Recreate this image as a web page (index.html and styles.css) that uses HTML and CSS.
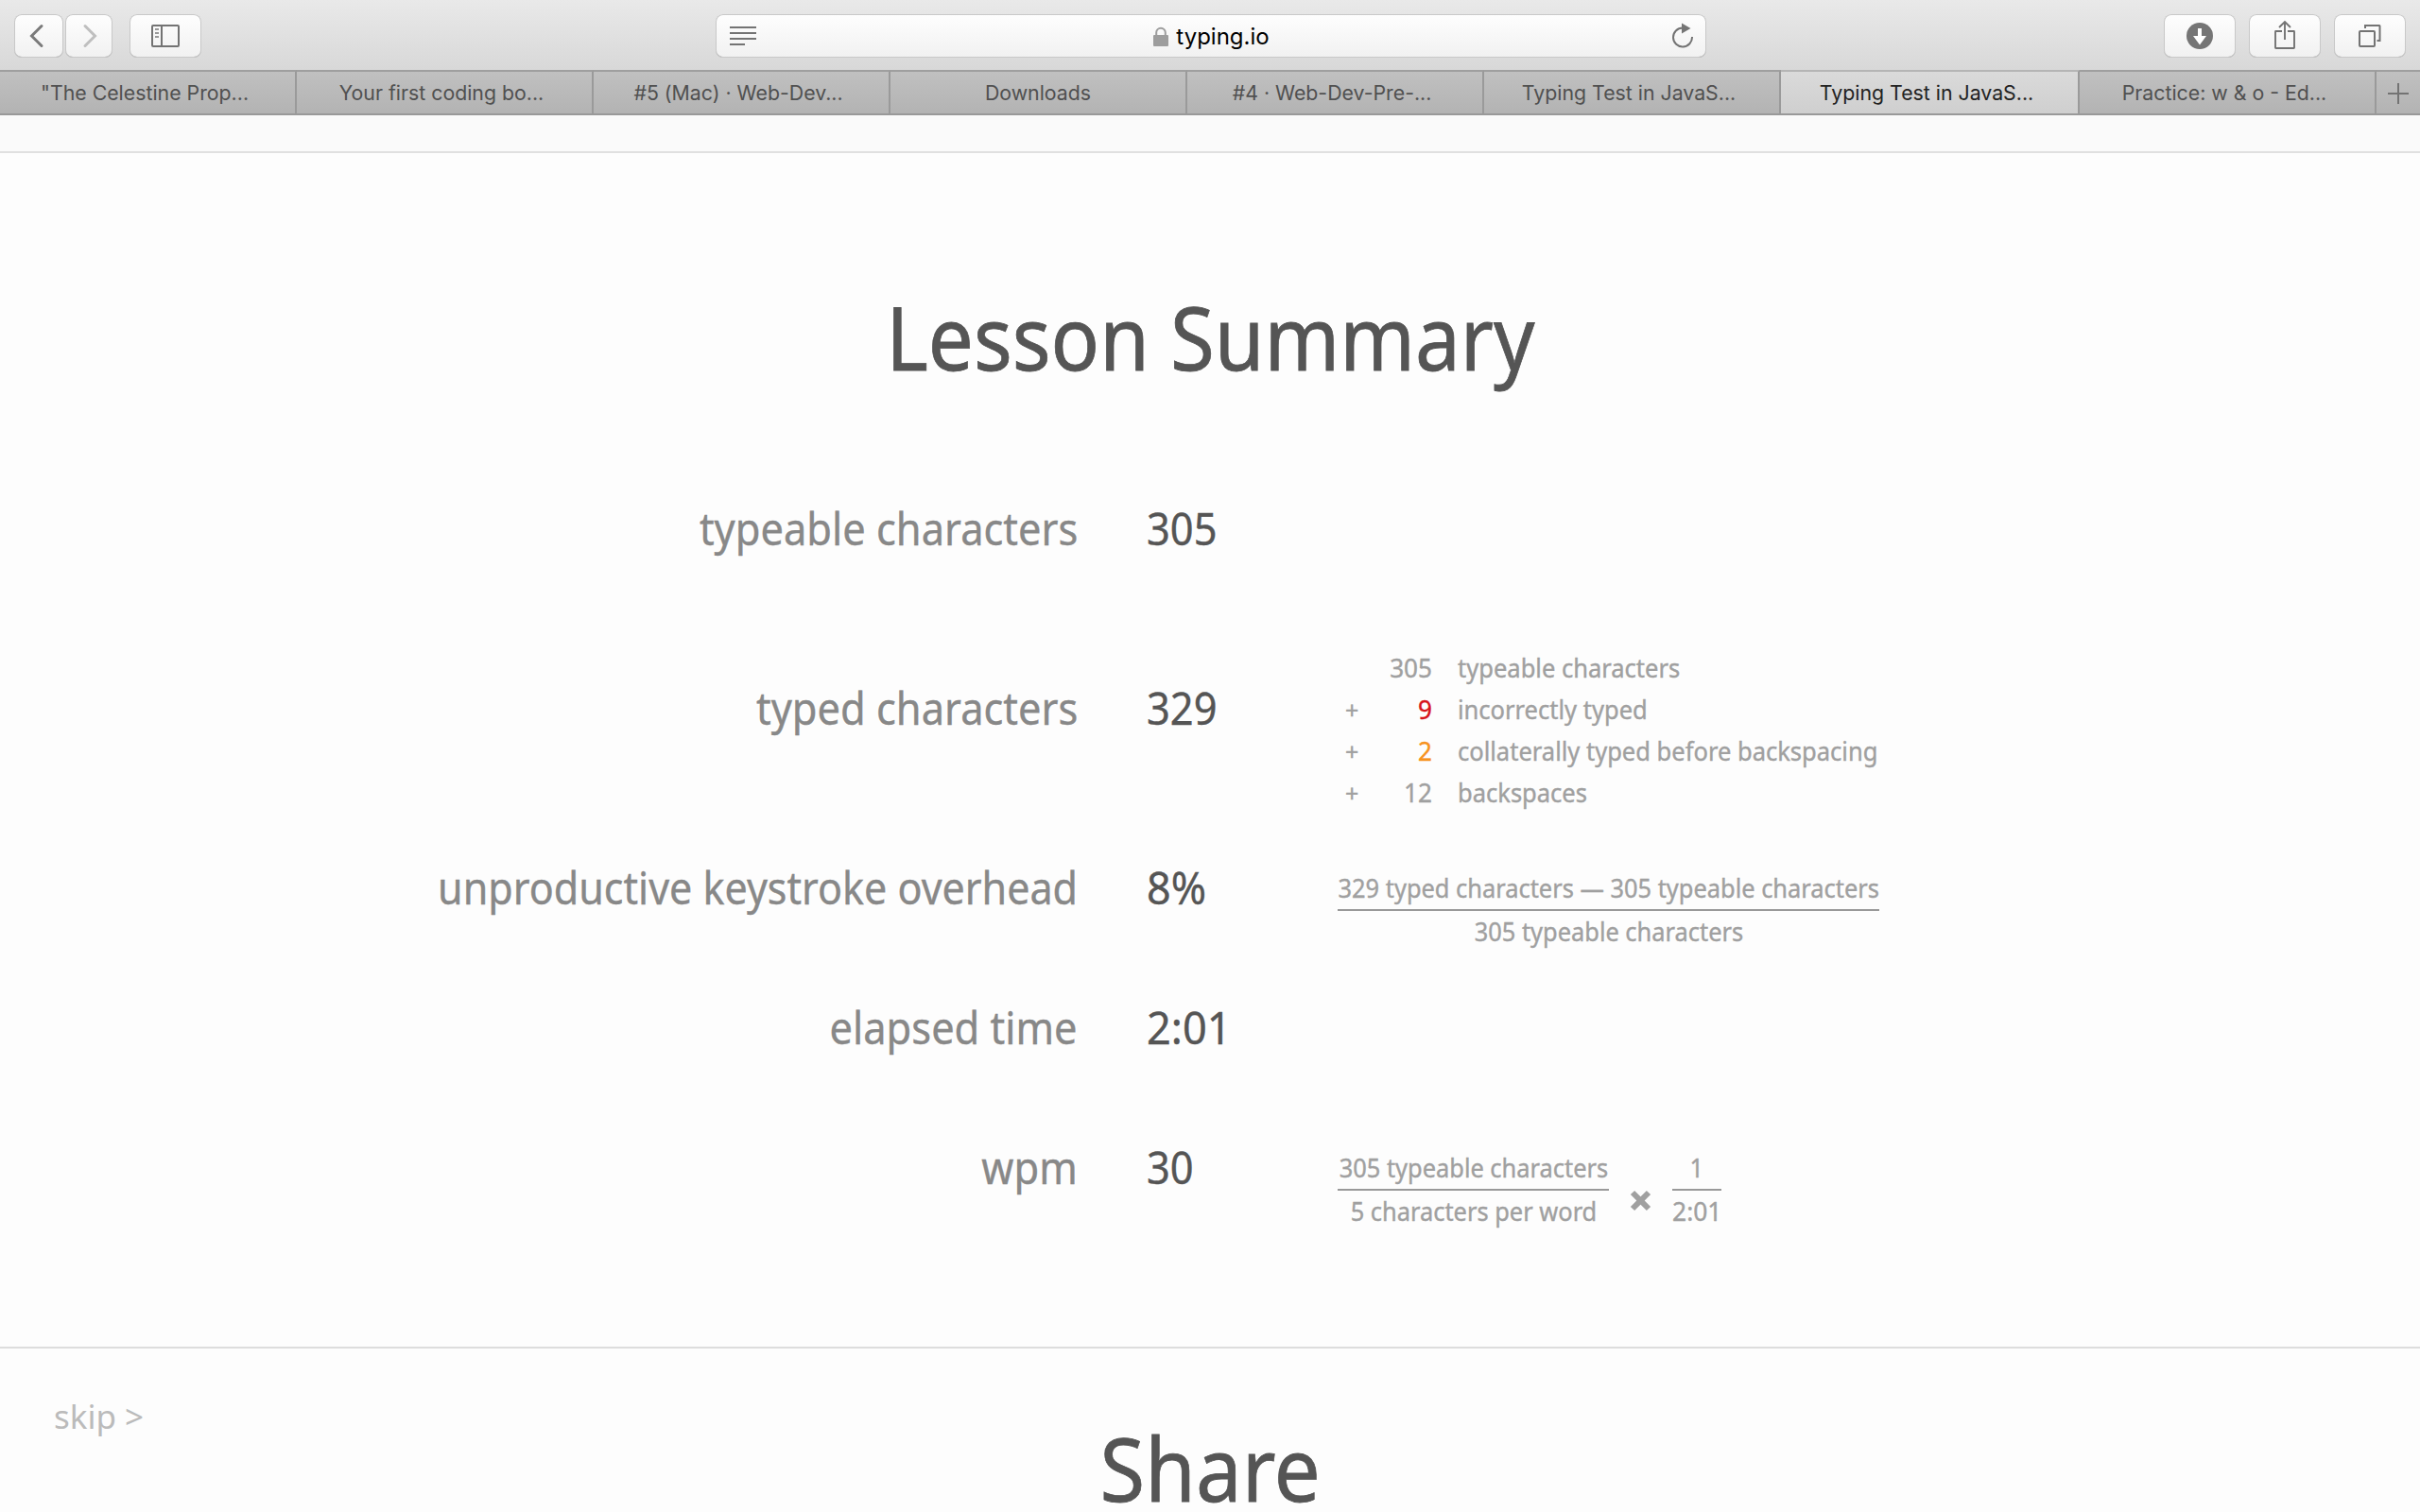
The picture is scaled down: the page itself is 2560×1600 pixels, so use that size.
FILE: index.html
```
<!DOCTYPE html>
<html lang="en">
<head>
<meta charset="utf-8">
<title>Typing Test in JavaScript</title>
<link rel="stylesheet" href="styles.css">
</head>
<body>
<header class="toolbar">
  <button class="btn btn-back" aria-label="Back"><svg width="52" height="46" viewBox="0 0 52 46"><path d="M29 12.5 18.5 23 29 33.500" class="chevron"/></svg></button>
  <button class="btn btn-forward" aria-label="Forward"><svg width="50" height="46" viewBox="0 0 50 46"><path d="M21 12.500 31.500 23 21 33.500" class="chevron chevron-off"/></svg></button>
  <button class="btn btn-sidebar" aria-label="Sidebar"><svg width="76" height="46" viewBox="0 0 76 46"><rect x="24" y="12" width="28" height="22" rx="1" class="line"/><path d="M34 12v22" class="line"/><path d="M27 16h4M27 20h4M27 24h4" class="line dash"/></svg></button>
  <div class="address">
    <svg width="30" height="24" viewBox="0 0 30 24"><path d="M0 3h28M0 9h28M0 15h28M0 21h16" class="line"/></svg>
    <div class="site">
      <svg width="16" height="22" viewBox="0 0 16 22"><rect y="9" width="16" height="12" rx="1" class="lock"/><path d="M3.200 10V6.500a4.800 4.800 0 0 1 9.600 0V10" class="shackle"/></svg>
      <span>typing.io</span>
    </div>
    <svg width="26" height="32" viewBox="0 0 26 32"><path d="M22 17a10 10 0 1 1-10-9.500" class="line"/><path d="M11 2.500 20.500 8 11 13.500z" class="solid"/></svg>
  </div>
  <div class="actions">
    <button class="btn" aria-label="Downloads"><svg width="76" height="46" viewBox="0 0 76 46"><circle cx="38" cy="23" r="14" class="solid"/><path d="M36 15h4v8h5l-7 9.500-7-9.500h5z" class="cutout"/></svg></button>
    <button class="btn" aria-label="Share"><svg width="76" height="46" viewBox="0 0 76 46"><path d="M35 18h-6.500q-.500 0-.500.500v17q0 .500.500.500h19q.500 0 .500-.500v-17q0-.500-.500-.500H41M38 27V8.500M32 14l6-6 6 6" class="line thin"/></svg></button>
    <button class="btn" aria-label="Tabs"><svg width="76" height="46" viewBox="0 0 76 46"><rect x="27" y="18" width="16" height="16" rx="1" class="line"/><path d="M33 15v-3h15q.500 0 .500.500V28h-3" class="line"/></svg></button>
  </div>
</header>
<nav class="tabs">
  <a class="tab">"The Celestine Prop...</a>
  <a class="tab">Your first coding bo...</a>
  <a class="tab">#5 (Mac) · Web-Dev...</a>
  <a class="tab tab-short">Downloads</a>
  <a class="tab">#4 · Web-Dev-Pre-...</a>
  <a class="tab">Typing Test in JavaS...</a>
  <a class="tab tab-active">Typing Test in JavaS...</a>
  <a class="tab">Practice: w &amp; o - Ed...</a>
  <a class="new-tab" aria-label="New tab"><svg width="22" height="22" viewBox="0 0 22 22"><path d="M0 11h22M11 0v22" class="line"/></svg></a>
</nav>
<div class="strip"></div>
<main class="summary">
  <h1 class="title"><span class="narrow narrow-title">Lesson Summary</span></h1>
  <div class="row">
    <div class="label"><span class="narrow">typeable characters</span></div>
    <div class="value"><span class="narrow">305</span></div>
  </div>
  <div class="row row-tall">
    <div class="label"><span class="narrow">typed characters</span></div>
    <div class="value"><span class="narrow">329</span></div>
    <div class="detail sum">
      <span></span><span class="num">305</span><span class="term">typeable characters</span>
      <span class="plus">+</span><span class="num wrong">9</span><span class="term">incorrectly typed</span>
      <span class="plus">+</span><span class="num collateral">2</span><span class="term">collaterally typed before backspacing</span>
      <span class="plus">+</span><span class="num">12</span><span class="term">backspaces</span>
    </div>
  </div>
  <div class="row">
    <div class="label"><span class="narrow narrow-long">unproductive keystroke overhead</span></div>
    <div class="value"><span class="narrow percent">8%</span></div>
    <div class="detail">
      <div class="fraction overhead">
        <div class="top"><span class="narrow">329 typed characters — 305 typeable characters</span></div>
        <div class="bottom"><span class="narrow">305 typeable characters</span></div>
      </div>
    </div>
  </div>
  <div class="row">
    <div class="label"><span class="narrow">elapsed time</span></div>
    <div class="value"><span class="narrow clock">2:01</span></div>
  </div>
  <div class="row">
    <div class="label"><span class="narrow">wpm</span></div>
    <div class="value"><span class="narrow">30</span></div>
    <div class="detail">
      <div class="fraction words">
        <div class="top"><span class="narrow">305 typeable characters</span></div>
        <div class="bottom"><span class="narrow">5 characters per word</span></div>
      </div>
      <svg class="times" width="21" height="21" viewBox="0 0 21 21"><path d="M2 2l17 17M19 2 2 19"/></svg>
      <div class="fraction minutes">
        <div class="top"><span class="narrow">1</span></div>
        <div class="bottom"><span class="narrow clock">2:01</span></div>
      </div>
    </div>
  </div>
</main>
<section class="share">
  <a class="skip">skip &gt;</a>
  <h1 class="title"><span class="narrow">Share</span></h1>
</section>
</body>
</html>
```
FILE: styles.css
```
* {
  box-sizing: border-box;
}

body {
  margin: 0;
  height: 1600px;
  overflow: hidden;
  display: flex;
  flex-direction: column;
  background: #fdfdfd;
  color: #555;
  font-family: "Noto Sans", "Open Sans", sans-serif;
}

svg {
  display: block;
  fill: none;
}

/* Browser chrome */
.toolbar {
  flex: none;
  height: 74px;
  padding: 15px;
  display: flex;
  background: linear-gradient(#e9e9e9, #d8d8d8);
}

.btn {
  width: 76px;
  height: 46px;
  padding: 0;
  border: 0;
  border-radius: 8px;
  background: linear-gradient(#fefefe, #f1f1f1);
  box-shadow: inset 0 0 0 1px #c8c8c8, inset 0 -1px 0 #a8a8a8;
}

.btn-back {
  width: 52px;
}

.btn-forward {
  width: 50px;
  margin-left: 2px;
}

.btn-sidebar {
  margin-left: 18px;
}

.address {
  width: 1048px;
  height: 46px;
  margin-left: 544px;
  padding: 0 11px 0 15px;
  display: flex;
  align-items: center;
  justify-content: space-between;
  border-radius: 8px;
  background: linear-gradient(#fefefe, #f1f1f1);
  box-shadow: inset 0 0 0 1px #c8c8c8, inset 0 -1px 0 #a0a0a0;
}

.site {
  display: flex;
  align-items: center;
  gap: 8px;
  color: #000;
  font: 24px/46px Inter, sans-serif;
  padding: 2px 7px 0 0;
}

.actions {
  margin-left: auto;
  display: flex;
  gap: 14px;
}

.line {
  stroke: #737373;
  stroke-width: 2;
}

.thin {
  stroke-width: 1.900;
}

.dash {
  stroke: #999;
}

.solid {
  fill: #757575;
}

.cutout {
  fill: #fff;
}

.lock {
  fill: #9d9d9d;
}

.shackle {
  stroke: #9d9d9d;
  stroke-width: 2;
}

.chevron {
  stroke: #7a7a7a;
  stroke-width: 3;
  stroke-linecap: round;
}

.chevron-off {
  stroke: #bfbfbf;
}

.tabs {
  flex: none;
  height: 48px;
  display: flex;
  border-bottom: 2px solid #999;
  background: #b9b9b9;
}

.tab {
  width: 314px;
  border-top: 2px solid #9f9f9f;
  border-right: 2px solid #9a9a9a;
  background: linear-gradient(#c0c0c0, #b3b3b3);
  color: #505050;
  font: 21.300px/45px Inter, sans-serif;
  text-align: center;
  white-space: nowrap;
  padding-right: 6px;
}

.tab-short {
  padding-right: 0;
}

.tab-active {
  width: 316px;
  border-top-color: #b5b5b5;
  background: linear-gradient(#dadada, #cfcfcf);
  color: #222;
}

.new-tab {
  flex: 1;
  border-top: 2px solid #9f9f9f;
  background: linear-gradient(#c0c0c0, #b3b3b3);
  padding: 12px;
}

/* Page */
.strip {
  flex: none;
  height: 40px;
  border-bottom: 2px solid #e0e0e0;
  background: #fafafa;
}

.summary {
  flex: none;
  height: 1265px;
  padding-top: 144px;
  border-bottom: 2px solid #ddd;
  -webkit-text-stroke: 0.400px;
}

.title {
  margin: 0;
  color: #555;
  font-size: 94px;
  font-weight: 400;
  line-height: 100px;
  text-align: center;
  -webkit-text-stroke: 0.800px;
}

.summary .title {
  margin-bottom: 79px;
}

/* Slightly condensed text */
.narrow {
  display: inline-block;
  white-space: nowrap;
  transform: scaleX(0.924);
}

.narrow-title {
  transform: scaleX(0.907);
}

.narrow-long {
  transform: scaleX(0.916);
}

.label .narrow {
  transform-origin: right;
}

.value .narrow {
  transform-origin: left;
}

.narrow.percent {
  transform: scaleX(0.955);
}

.narrow.clock {
  transform: scaleX(0.960);
}

.row {
  height: 148px;
  display: grid;
  grid-template-columns: 1140px 202px 1fr;
  column-gap: 0;
  font-size: 47px;
  line-height: 149px;
}

.row-tall {
  height: 232px;
  line-height: 233px;
}

.label {
  color: #888;
  text-align: right;
}

.value {
  margin-left: 73px;
  white-space: nowrap;
}

.detail {
  margin-left: 73px;
  padding-top: 52px;
  display: flex;
  align-items: flex-start;
  color: #a0a0a0;
  font-size: 27.500px;
  line-height: 46px;
}

.sum {
  display: grid;
  grid-template-columns: 30px 62px 1fr;
  grid-auto-rows: 44px;
  padding: 51px 0 0 8px;
}

.plus {
  font-size: 25px;
}

.num {
  text-align: right;
  transform: scaleX(0.950);
  transform-origin: right;
}

.wrong {
  color: #d7141a;
}

.collateral {
  color: #f7931e;
}

.term {
  margin-left: 27px;
  white-space: nowrap;
  transform: scaleX(0.928);
  transform-origin: left;
}

.fraction {
  display: flex;
  flex-direction: column;
}

.fraction div {
  display: flex;
  justify-content: center;
}

.fraction .top {
  height: 47px;
  border-bottom: 2px solid #999;
}

.fraction .bottom {
  line-height: 44px;
}

.overhead {
  width: 573px;
}

.words {
  width: 287px;
}

.minutes {
  width: 52px;
}

.times {
  margin: 47px 23px 0;
  overflow: visible;
  stroke: #a0a0a0;
  stroke-width: 6;
}

.share {
  flex: none;
  height: 173px;
  display: grid;
  grid-template-columns: 1fr auto 1fr;
}

.skip {
  padding: 52px 0 0 57px;
  color: #bbb;
  font-size: 35px;
  line-height: 40px;
}

.share .title {
  padding-top: 82px;
  line-height: 88px;
}
```
